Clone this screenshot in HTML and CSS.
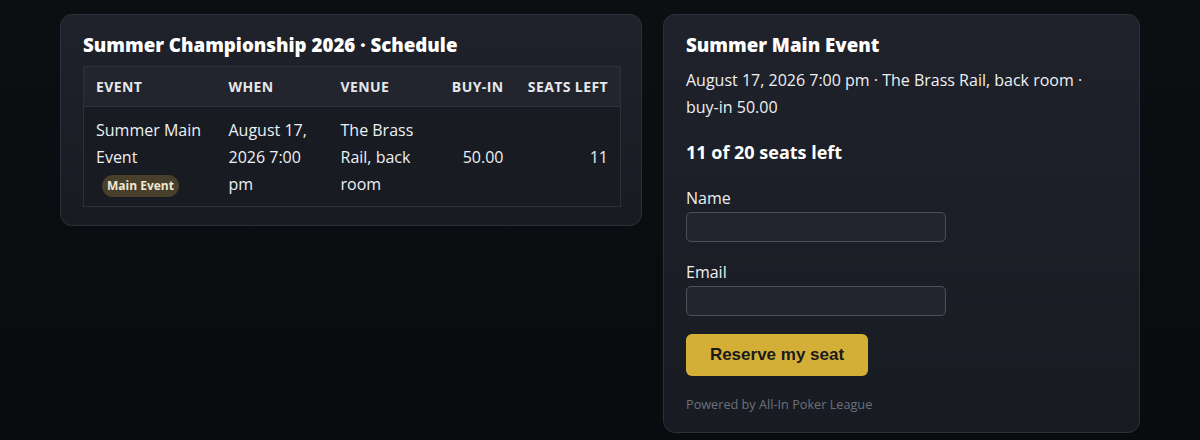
FILE: index.html
```html
<!DOCTYPE html>
<html lang="en">
<head>
<meta charset="utf-8">
<title>Summer Championship 2026</title>
<link rel="stylesheet" href="styles.css">
</head>
<body>
<main class="wrap">
  <section class="card schedule">
    <h2 class="card-title">Summer Championship 2026 · Schedule</h2>
    <table class="sched">
      <colgroup>
        <col class="c-event"><col class="c-when"><col class="c-venue"><col class="c-buy"><col class="c-seats">
      </colgroup>
      <thead>
        <tr><th>Event</th><th>When</th><th>Venue</th><th class="num">Buy-in</th><th class="num">Seats left</th></tr>
      </thead>
      <tbody>
        <tr>
          <td>Summer Main Event <span class="badge">Main Event</span></td>
          <td>August 17, 2026 7:00 pm</td>
          <td>The Brass Rail, back room</td>
          <td class="num">50.00</td>
          <td class="num">11</td>
        </tr>
      </tbody>
    </table>
  </section>
  <section class="card booking">
    <h2 class="card-title">Summer Main Event</h2>
    <p class="meta">August 17, 2026 7:00 pm · The Brass Rail, back room · buy-in 50.00</p>
    <p class="seats">11 of 20 seats left</p>
    <form class="form">
      <label class="field"><span class="lbl">Name</span><input type="text" class="input"></label>
      <label class="field"><span class="lbl">Email</span><input type="email" class="input"></label>
      <button type="button" class="btn">Reserve my seat</button>
    </form>
    <p class="powered">Powered by All-In Poker League</p>
  </section>
</main>
</body>
</html>
```

FILE: styles.css
```css
* { box-sizing: border-box; }
html, body { margin: 0; }
body {
  background: linear-gradient(180deg, #0d0e12 0%, #0a0b0f 100%);
  min-height: 440px;
  color: #e6e8ec;
  font-family: "Open Sans", "Noto Sans", sans-serif;
  font-size: 16px;
}
.wrap {
  width: 1080px;
  margin: 0 auto;
  padding: 14px 0;
  display: grid;
  grid-template-columns: 582px 477px;
  gap: 21px;
  align-items: start;
}
.card {
  background: linear-gradient(180deg, #1f222a 0%, #181b22 100%);
  border: 1px solid #2c3039;
  border-radius: 12px;
  padding: 18px 22px 18px;
}
.booking { padding-bottom: 20px; }
.card-title {
  margin: 0;
  font-size: 18.7px;
  font-weight: 800;
  line-height: 24px;
  color: #ffffff;
}
.sched {
  margin-top: 9px;
  width: 100%;
  table-layout: fixed;
  border-collapse: collapse;
  border: 1px solid #2c3039;
  background: #181b22;
}
.c-event { width: 133px; }
.c-when { width: 112px; }
.c-venue { width: 100px; }
.c-buy { width: 87px; }
.c-seats { width: 105px; }
.sched th {
  background: #22252d;
  text-align: left;
  text-transform: uppercase;
  font-size: 14px;
  font-weight: 700;
  letter-spacing: 0.4px;
  color: #e6e8ec;
  padding: 9px 12px;
  height: 40px;
  border-bottom: 1px solid #2c3039;
  white-space: nowrap;
}
.sched td {
  padding: 10px 12px 8px;
  vertical-align: middle;
  line-height: 27px;
  color: #eef0f3;
}
.sched .num { text-align: right; }
.badge {
  display: inline-block;
  margin-left: 6px;
  padding: 0 5px;
  height: 22px;
  line-height: 22px;
  border-radius: 11px;
  background: #48402a;
  color: #efe8d4;
  font-size: 12px;
  font-weight: 700;
  vertical-align: middle;
}
.meta {
  margin: 10px 0 0;
  line-height: 27px;
  color: #eef0f3;
}
.seats {
  margin: 19px 0 0;
  font-size: 18px;
  font-weight: 700;
  line-height: 24px;
  color: #ffffff;
}
.form {
  margin-top: 23px;
  display: flex;
  flex-direction: column;
  align-items: flex-start;
  gap: 19px;
}
.field {
  display: flex;
  flex-direction: column;
  gap: 3px;
}
.lbl {
  line-height: 22px;
  color: #eef0f3;
}
.input {
  width: 260px;
  height: 30px;
  background: #22252d;
  border: 1px solid #4b5059;
  border-radius: 5px;
  color: #eef0f3;
}
.btn {
  margin-top: -1px;
  width: 182px;
  height: 42px;
  background: #d4af37;
  border: 0;
  border-radius: 6px;
  color: #1a1a1a;
  font-family: "Liberation Sans", Arial, sans-serif;
  font-size: 17px;
  font-weight: 700;
}
.powered {
  margin: 20px 0 0;
  font-size: 12.7px;
  line-height: 16px;
  color: #6b717c;
}
```
